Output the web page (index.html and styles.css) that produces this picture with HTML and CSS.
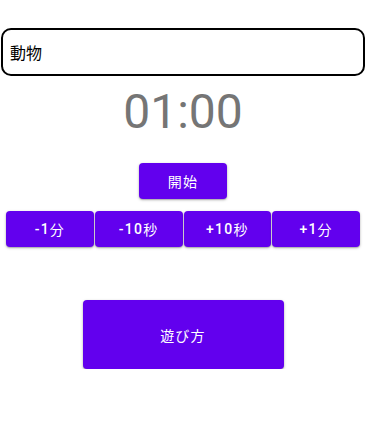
FILE: index.html
```html
<!DOCTYPE html>
<html lang="ja">
<head>
<meta charset="utf-8">
<link rel="stylesheet" href="styles.css">
</head>
<body>
<div class="page">
  <div class="field">動物</div>
  <div class="timer">01:00</div>
  <div class="start-wrap"><button class="btn start"><span class="ja">開始</span></button></div>
  <div class="row">
    <button class="btn step">-1<span class="ja">分</span></button>
    <button class="btn step">-10<span class="ja">秒</span></button>
    <button class="btn step">+10<span class="ja">秒</span></button>
    <button class="btn step">+1<span class="ja">分</span></button>
  </div>
  <div class="howto-wrap"><button class="btn howto"><span class="ja">遊び方</span></button></div>
</div>
</body>
</html>
```
FILE: styles.css
```css
html, body {
  margin: 0;
  padding: 0;
  background: #ffffff;
}
.page {
  width: 366px;
  font-family: Roboto, "Noto Sans CJK JP", sans-serif;
}
.field {
  box-sizing: border-box;
  margin: 28px 1px 0 1px;
  height: 48px;
  border: 2px solid #000000;
  border-radius: 10px;
  padding-left: 7px;
  display: flex;
  align-items: center;
  font-size: 16px;
  color: #000000;
}
.timer {
  margin-top: 8px;
  text-align: center;
  font-size: 48px;
  line-height: 56px;
  color: #757575;
}
.start-wrap, .howto-wrap {
  display: flex;
  justify-content: center;
}
.start-wrap {
  margin-top: 23px;
}
.btn {
  box-sizing: border-box;
  border: none;
  margin: 0;
  padding: 0;
  background: #6200ee;
  color: #ffffff;
  border-radius: 4px;
  font-family: Roboto, "Noto Sans CJK JP", sans-serif;
  font-size: 14px;
  font-weight: 500;
  letter-spacing: 1.25px;
  box-shadow: 0 1px 3px rgba(0, 0, 0, 0.28), 0 1px 1px rgba(0, 0, 0, 0.14);
  display: flex;
  align-items: center;
  justify-content: center;
}
.ja {
  font-weight: 400;
}
.start {
  width: 88px;
  height: 36px;
}
.row {
  margin-top: 12px;
  padding: 0 6px;
  display: flex;
  gap: 1px;
}
.step {
  flex: 1;
  height: 36px;
}
.howto-wrap {
  margin-top: 53px;
}
.howto {
  width: 201px;
  height: 69px;
}
```
